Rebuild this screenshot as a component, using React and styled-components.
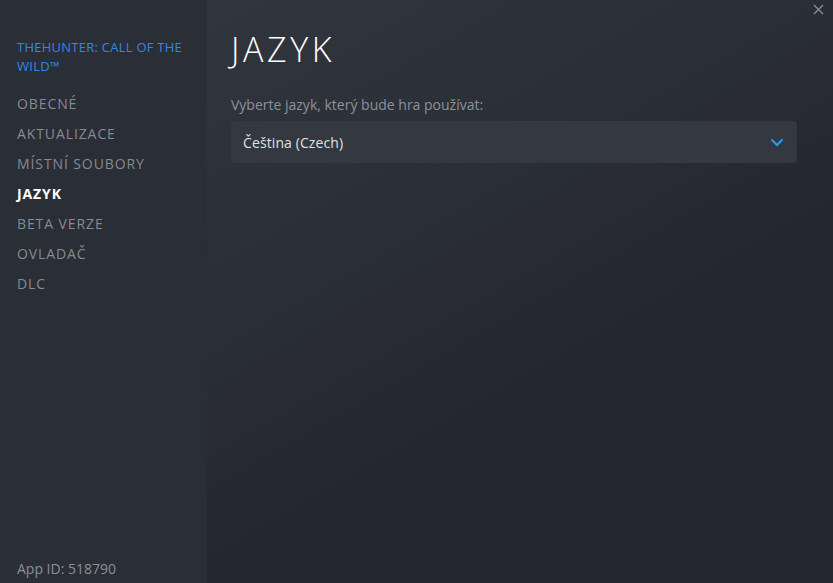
import React from "react";
import styled, { createGlobalStyle } from "styled-components";

const Global = createGlobalStyle`
  html, body { margin: 0; padding: 0; background: #23262e; }
  body { font-family: "Open Sans", "Noto Sans", sans-serif; }
  #root { height: 583px; }
`;

const Window = styled.div`
  display: flex;
  width: 833px;
  height: 583px;
  overflow: hidden;
  position: relative;
`;

const Sidebar = styled.nav`
  width: 207px;
  flex: none;
  background: #2a2e36;
  display: flex;
  flex-direction: column;
  padding: 38px 0 0 17px;
  box-sizing: border-box;
`;

const GameTitle = styled.div`
  color: #2f87e8;
  font-size: 13px;
  line-height: 19px;
  letter-spacing: 0.25px;
  text-transform: uppercase;
  margin-bottom: 13px;
  width: 185px;
`;

const NavList = styled.div`
  display: flex;
  flex-direction: column;
`;

const NavItem = styled.div`
  font-size: 14px;
  line-height: 30px;
  letter-spacing: 0.9px;
  text-transform: uppercase;
  color: ${(p) => (p.$active ? "#ffffff" : "#868a91")};
  font-weight: ${(p) => (p.$active ? 700 : 400)};
`;

const AppId = styled.div`
  margin-top: auto;
  margin-bottom: 4px;
  font-size: 14px;
  line-height: 20px;
  color: #8b8f96;
`;

const Main = styled.main`
  flex: 1;
  background: linear-gradient(150deg, #31353e 0%, #2a2e36 35%, #24272f 60%, #23262e 100%);
  padding: 29px 36px 0 24px;
  box-sizing: border-box;
  display: flex;
  flex-direction: column;
`;

const Heading = styled.h1`
  margin: 0 0 26px 0;
  font-weight: 300;
  font-size: 34px;
  line-height: 41px;
  letter-spacing: 3.6px;
  color: #ffffff;
`;

const Label = styled.div`
  font-size: 14px;
  line-height: 18px;
  color: #8b929a;
  margin-bottom: 7px;
`;

const Select = styled.div`
  height: 42px;
  background: #343841;
  border-radius: 3px;
  display: flex;
  align-items: center;
  justify-content: space-between;
  padding: 0 13px 0 12px;
  color: #dfe1e4;
  font-size: 14px;
  letter-spacing: 0.1px;
`;

const CloseButton = styled.div`
  position: absolute;
  top: 2px;
  right: 8px;
  width: 14px;
  height: 14px;
  display: flex;
  align-items: center;
  justify-content: center;
`;

export default function App() {
  const items = ["Obecné", "Aktualizace", "Místní soubory", "Jazyk", "Beta verze", "Ovladač", "DLC"];
  return (
    <>
      <Global />
      <Window>
        <Sidebar>
          <GameTitle>theHunter: Call of the Wild™</GameTitle>
          <NavList>
            {items.map((t) => (
              <NavItem key={t} $active={t === "Jazyk"}>{t}</NavItem>
            ))}
          </NavList>
          <AppId>App ID: 518790</AppId>
        </Sidebar>
        <Main>
          <Heading>JAZYK</Heading>
          <Label>Vyberte jazyk, který bude hra používat:</Label>
          <Select>
            <span>Čeština (Czech)</span>
            <svg width="14" height="9" viewBox="0 0 14 9" fill="none">
              <path d="M1.5 1.5 L7 7 L12.5 1.5" stroke="#1a9fff" strokeWidth="2" />
            </svg>
          </Select>
        </Main>
        <CloseButton>
          <svg width="11" height="11" viewBox="0 0 11 11">
            <path d="M1 1 L10 10 M10 1 L1 10" stroke="#8b9096" strokeWidth="1.3" />
          </svg>
        </CloseButton>
      </Window>
    </>
  );
}
